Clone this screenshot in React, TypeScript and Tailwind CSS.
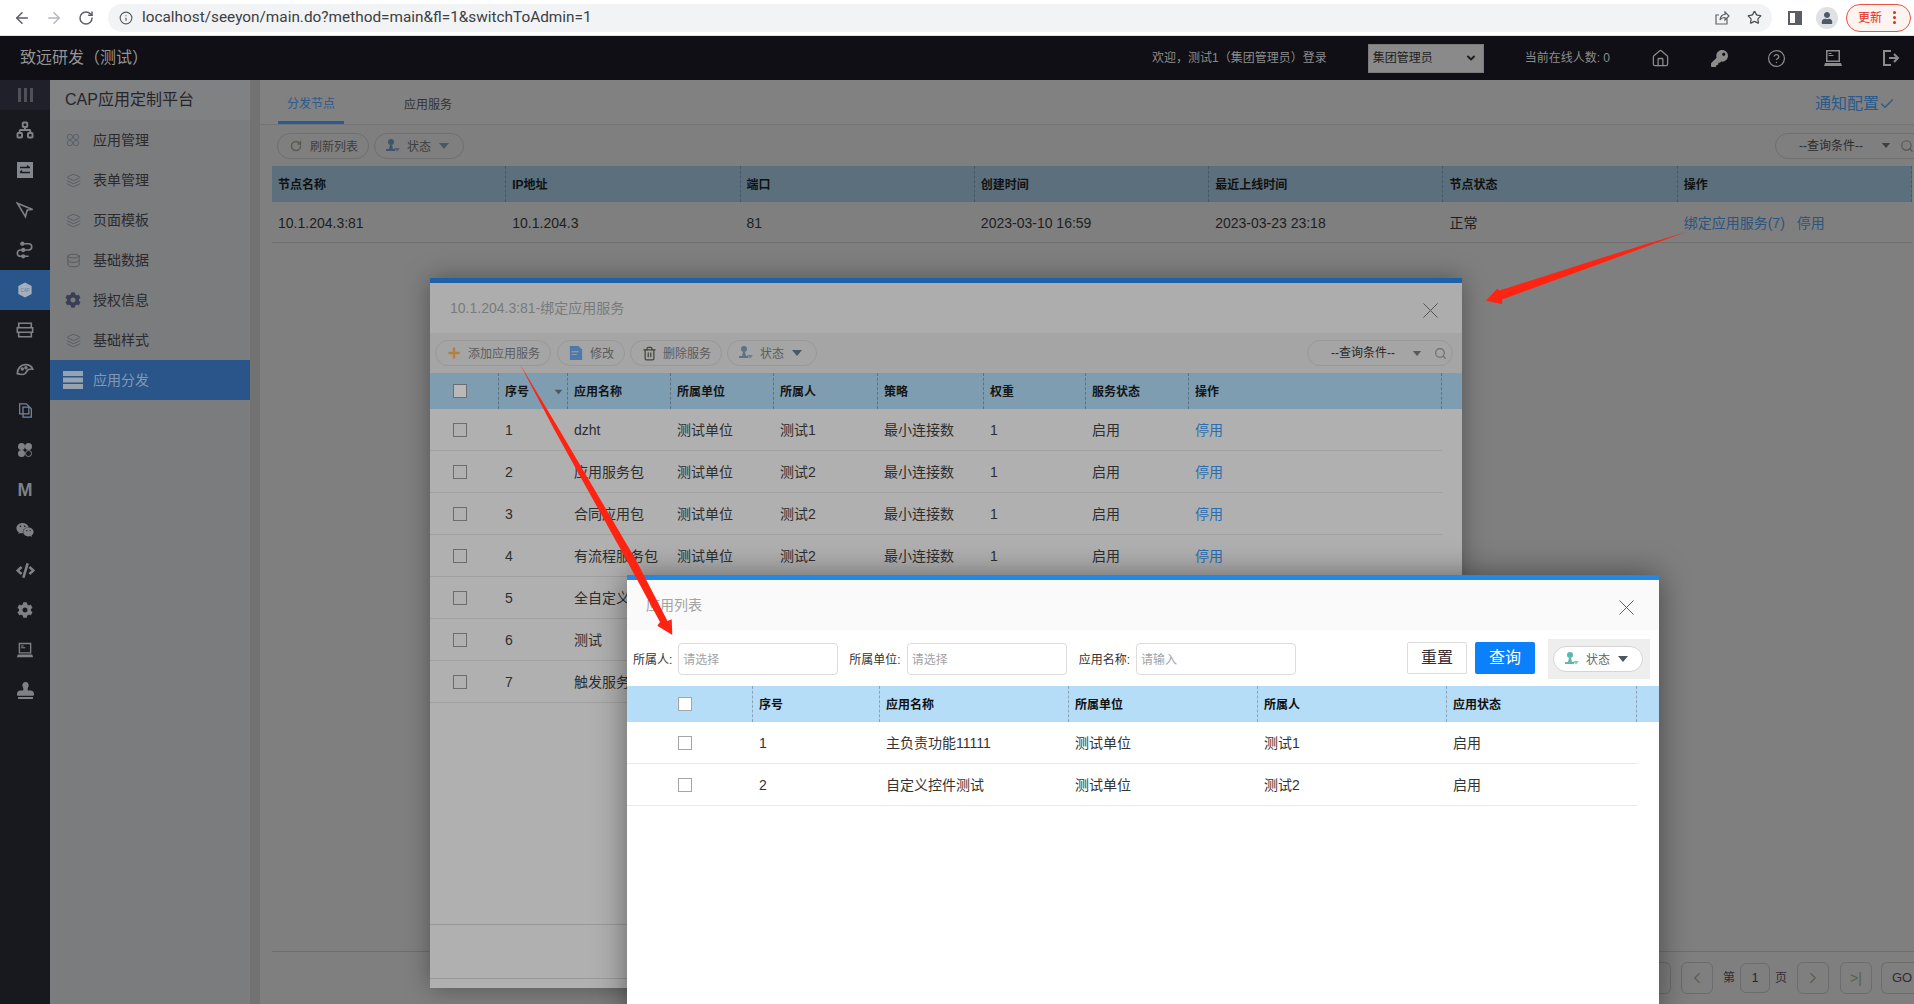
import React from 'react';
import {
  ArrowLeft, ArrowRight, RotateCw, Info, Star, House, CircleHelp, ChevronDown, Check, Search,
  Database, Layers, Network, Plus, Trash2, ChevronLeft, ChevronRight,
} from 'lucide-react';
import { FaKey, FaWeixin, FaCog, FaStamp, FaCode, FaUser } from 'react-icons/fa';

const FilterUser = ({ className }: { className?: string }) => (
  <svg viewBox="0 0 16 16" className={className} fill="currentColor">
    <circle cx="6" cy="4" r="3" />
    <path d="M5 7h2l1 4h2v2H1v-2h3z" />
    <path d="M9 10h6l-3 3.5z" opacity="0.75" />
  </svg>
);

const Caret = ({ className }: { className?: string }) => (
  <svg viewBox="0 0 12 8" className={className} fill="currentColor">
    <path d="M1 1h10L6 7z" />
  </svg>
);

const CloseX = ({ className }: { className?: string }) => (
  <svg viewBox="0 0 16 16" className={className} stroke="currentColor" strokeWidth="1" fill="none">
    <path d="M0.5 0.5l15 15M15.5 0.5l-15 15" />
  </svg>
);

const Clover = ({ className }: { className?: string }) => (
  <svg viewBox="0 0 16 16" className={className} stroke="currentColor" fill="none">
    <circle cx="4.5" cy="4.5" r="3" />
    <circle cx="11.5" cy="4.5" r="3" />
    <circle cx="4.5" cy="11.5" r="3" />
    <circle cx="11.5" cy="11.5" r="3" />
  </svg>
);

const Laptop = ({ className }: { className?: string }) => (
  <svg viewBox="0 0 20 20" className={className} fill="currentColor">
    <path fillRule="evenodd" d="M3 2h14v12H3zM4.500 3.500v9h11v-9z" />
    <path d="M5.500 5h3v1h-3zM5.500 7h5v1h-5z" />
    <path d="M2 15h16l1 3H1z" />
  </svg>
);

const railIcons: React.ReactNode[] = [
  <Network key="a" className="w-[18px] h-[18px]" strokeWidth={2.6} />,
  <svg key="b" viewBox="0 0 18 18" className="w-[18px] h-[18px]">
    <rect x="1" y="1" width="16" height="16" fill="#85878e" />
    <path d="M4 6.500h10M11 4.500l2 2M4 11.500h10M6 9.500l-2 2" stroke="#1a1b21" strokeWidth="1.300" fill="none" />
  </svg>,
  <svg key="c" viewBox="0 0 20 18" className="w-[18px] h-[18px]" stroke="currentColor" strokeWidth="1.800" fill="none">
    <path d="M1.500 1.500l17 7-6 .5-2 7.500z" />
  </svg>,
  <svg key="d" viewBox="0 0 20 20" className="w-[18px] h-[18px]" stroke="currentColor" strokeWidth="1.800" fill="none">
    <path d="M7 3h7a3 3 0 010 7H5a3.500 3.500 0 000 7h9" />
    <circle cx="7" cy="3" r="1.500" fill="currentColor" />
    <circle cx="8" cy="10" r="1.500" fill="currentColor" />
    <circle cx="8" cy="17" r="1.500" fill="currentColor" />
  </svg>,
  <svg key="e" viewBox="0 0 18 18" className="w-4 h-4">
    <path d="M9 0.500l7.500 4v9l-7.500 4-7.500-4v-9z" fill="#a5afb9" />
    <text x="9" y="11" textAnchor="middle" fontSize="5" fill="#5d7fa6">CAP</text>
  </svg>,
  <svg key="f" viewBox="0 0 20 18" className="w-[18px] h-[18px]" stroke="currentColor" strokeWidth="1.800" fill="none">
    <path d="M3 1.500h14v5H3zM1.500 6.500h17v5h-17zM3 11.500h14v5H3z" />
  </svg>,
  <svg key="g" viewBox="0 0 20 18" className="w-[18px] h-[18px]" stroke="currentColor" strokeWidth="1.900" fill="none">
    <path d="M1.500 13c0-6 4-10 9-10 4 0 7 2 8 5-4-.5-6 1-7 3-1 3-3 4-10 2z" />
    <circle cx="7" cy="8" r="1" fill="currentColor" />
    <circle cx="11" cy="6.500" r="1" fill="currentColor" />
  </svg>,
  <svg key="h" viewBox="0 0 16 18" className="w-[15px] h-[15px]" stroke="currentColor" strokeWidth="1.500" fill="none">
    <path d="M1 1h8l3 3v9H1z" />
    <path d="M5 5h8l2 2v10H5z" stroke="#6e87a8" />
  </svg>,
  <svg key="i" viewBox="0 0 16 16" className="w-4 h-4" fill="currentColor">
    <circle cx="4.500" cy="4.500" r="3.500" />
    <circle cx="11.500" cy="4.500" r="3.500" />
    <circle cx="4.500" cy="11.500" r="3.500" />
    <circle cx="11.500" cy="11.500" r="3" fill="none" stroke="currentColor" />
  </svg>,
  <span key="j" className="text-[18px] leading-none font-bold">M</span>,
  <FaWeixin key="k" className="w-[18px] h-[18px]" />,
  <FaCode key="l" className="w-[19px] h-[19px]" />,
  <FaCog key="m" className="w-4 h-4" />,
  <Laptop key="n" className="w-[18px] h-[18px]" />,
  <FaStamp key="o" className="w-[17px] h-[17px]" />,
];

const navItems = [
  { label: '应用管理', icon: <Clover className="w-[14px] h-[14px] text-[#555d62]" /> },
  { label: '表单管理', icon: <Layers className="w-[15px] h-[15px] text-[#555d62]" strokeWidth={1.5} /> },
  { label: '页面模板', icon: <Layers className="w-[15px] h-[15px] text-[#555d62]" strokeWidth={1.5} /> },
  { label: '基础数据', icon: <Database className="w-[15px] h-[15px] text-[#54595d]" strokeWidth={1.5} /> },
  { label: '授权信息', icon: <FaCog className="w-4 h-4 text-[#3a3f55]" /> },
  { label: '基础样式', icon: <Layers className="w-[15px] h-[15px] text-[#555d62]" strokeWidth={1.5} /> },
];

function Pill({ icon, label, caret, className }: { icon: React.ReactNode; label: string; caret?: boolean; className: string }) {
  return (
    <div className={`h-[26px] rounded-full border flex items-center pl-[10px] pr-[10px] gap-[6px] text-[12px] shrink-0 ${className}`}>
      <span className="w-4 h-4 flex items-center justify-center">{icon}</span>
      <span className="mt-[2px]">{label}</span>
      {caret && <Caret className="w-3 h-2 ml-[1px] mr-[3px] text-[#4a5863]" />}
    </div>
  );
}

const mainHead = ['节点名称', 'IP地址', '端口', '创建时间', '最近上线时间', '节点状态', '操作'];
const m1Head = ['序号', '应用名称', '所属单位', '所属人', '策略', '权重', '服务状态', '操作'];
const m1Rows = [
  ['1', 'dzht', '测试单位', '测试1'],
  ['2', '应用服务包', '测试单位', '测试2'],
  ['3', '合同应用包', '测试单位', '测试2'],
  ['4', '有流程服务包', '测试单位', '测试2'],
  ['5', '全自定义', '测试单位', '测试2'],
  ['6', '测试', '测试单位', '测试2'],
  ['7', '触发服务', '测试单位', '测试2'],
];
const m2Head = ['序号', '应用名称', '所属单位', '所属人', '应用状态'];
const m2Rows = [
  ['1', '主负责功能11111', '测试单位', '测试1', '启用'],
  ['2', '自定义控件测试', '测试单位', '测试2', '启用'],
];

const PageBtn = ({ children, className }: { children?: React.ReactNode; className?: string }) => (
  <div className={`w-8 h-8 rounded-md border border-[#6c6c6c] flex items-center justify-center shrink-0 ${className ?? ''}`}>
    {children}
  </div>
);

function Field({ label, hint, className }: { label: string; hint: string; className?: string }) {
  return (
    <div className={`flex items-center gap-[6px] mt-[2px] ${className ?? ''}`}>
      <span className="text-[12px] pt-[2px] text-[#333]">{label}</span>
      <div className="w-[160px] h-8 rounded border border-[#dcdcdc] pl-[4px] pt-[2px] flex items-center text-[12px] text-[#a3a3a3]">{hint}</div>
    </div>
  );
}

export default function App() {
  return (
    <div className="relative w-screen h-screen overflow-hidden flex flex-col bg-[#7f7f7f] [font-family:'Liberation_Sans','Noto_Sans_CJK_SC',sans-serif]">
      {/* Browser bar */}
      <div className="h-[36px] shrink-0 bg-white border-b border-[#dfe1e5] flex items-center text-[#5f6368]">
        <ArrowLeft className="w-[18px] h-[18px] ml-[13px] text-[#5a5d62]" strokeWidth={2} />
        <ArrowRight className="w-[18px] h-[18px] ml-[14px] text-[#b5b7bb]" strokeWidth={2} />
        <RotateCw className="w-4 h-4 ml-[15px] text-[#5a5d62]" strokeWidth={2.2} />
        <div className="ml-[14px] w-[1664px] h-[28px] rounded-full bg-[#f1f3f4] flex items-center pl-[11px] pr-[10px]">
          <Info className="w-[14px] h-[14px] text-[#5a5d62]" />
          <span className="ml-[9px] text-[15.35px] text-[#3c4043] [font-family:Roboto,sans-serif]">localhost/seeyon/main.do?method=main&amp;fl=1&amp;switchToAdmin=1</span>
          <svg viewBox="0 0 16 16" className="w-4 h-4 ml-auto text-[#5f6368]" fill="none" stroke="currentColor" strokeWidth="1.200">
            <path d="M13 8.500V14H2V5h3M6 10c0-4 3-5.500 5-5.500V2l4 4-4 4V7.500C9 7.500 7 8 6 10z" />
          </svg>
          <Star className="w-[15px] h-[15px] ml-[17px] text-[#4b4e52]" strokeWidth={2} />
        </div>
        <div className="ml-[16px] w-[14px] h-[14px] border-2 border-[#5a5d62] flex justify-end">
          <div className="w-[5px] bg-[#5a5d62]" />
        </div>
        <div className="ml-[14px] w-[22px] h-[22px] rounded-full bg-[#dfe1e5] flex items-center justify-center overflow-hidden">
          <FaUser className="w-3 h-3 text-[#4d5a6a]" />
        </div>
        <div className="ml-[8px] w-[65px] h-[28px] rounded-full border border-[#e8523f] bg-[#fdf3f1] flex items-center pl-[11px] text-[12px] text-[#e02a1c]">
          <span>更新</span>
          <span className="ml-[11px] flex flex-col gap-[2px]">
            <span className="w-[3px] h-[3px] rounded-full bg-[#e02a1c]" />
            <span className="w-[3px] h-[3px] rounded-full bg-[#e02a1c]" />
            <span className="w-[3px] h-[3px] rounded-full bg-[#e02a1c]" />
          </span>
        </div>
      </div>

      {/* App header */}
      <div className="h-[44px] shrink-0 bg-[#0f0f15] flex items-center text-[#8c8c8c]">
        <span className="ml-5 text-[16px] text-[#949494]">致远研发（测试）</span>
        <span className="ml-auto text-[12px]">欢迎，测试1（集团管理员）登录</span>
        <div className="ml-[41px] w-[116px] h-[29px] bg-[#8a8a8a] border border-[#7a7a7a] flex items-center pl-1 text-[12px] text-[#1f1f1f]">
          <span>集团管理员</span>
          <ChevronDown className="w-3 h-3 ml-auto mr-[6px]" strokeWidth={4} />
        </div>
        <span className="ml-[41px] text-[12px]">当前在线人数: 0</span>
        <House className="w-[19px] h-[19px] ml-[41px]" strokeWidth={1.6} />
        <FaKey className="w-[17px] h-[17px] ml-[41px]" />
        <CircleHelp className="w-[19px] h-[19px] ml-[39px]" strokeWidth={1.6} />
        <Laptop className="w-5 h-5 ml-[37px]" />
        <svg viewBox="0 0 20 20" className="w-5 h-5 ml-[37px] mr-[14px]" fill="none" stroke="currentColor" strokeWidth="2">
          <path d="M11 3H4v14h7M9 10h9M14 6l4 4-4 4" />
        </svg>
      </div>

      <div className="flex flex-1 min-h-0">
        {/* Icon rail */}
        <div className="w-[50px] shrink-0 bg-[#18191f] text-[#7f8187] flex flex-col">
          <div className="h-[30px] bg-[#20202a] flex items-center justify-center gap-[3px]">
            <span className="w-[3px] h-[14px] bg-[#4f5058]" />
            <span className="w-[3px] h-[14px] bg-[#4f5058]" />
            <span className="w-[3px] h-[14px] bg-[#4f5058]" />
          </div>
          {railIcons.map((icon, i) => (
            <div key={i} className={`h-10 flex items-center justify-center ${i === 4 ? 'bg-[#29558a]' : ''}`}>{icon}</div>
          ))}
        </div>

        {/* Nav column */}
        <div className="w-[200px] shrink-0 bg-[#7b7c7e] flex flex-col">
          <div className="h-10 bg-[#808183] flex items-center pl-[15px] text-[16px] text-[#26262a]">CAP应用定制平台</div>
          {navItems.map((item) => (
            <div key={item.label} className="h-10 flex items-center text-[14px] text-[#2b2b2e]">
              <span className="w-[43px] flex justify-center pl-[3px]">{item.icon}</span>
              {item.label}
            </div>
          ))}
          <div className="h-10 bg-[#29558a] flex items-center text-[14px] text-[#8598b0]">
            <svg viewBox="0 0 20 18" className="w-5 h-[18px] ml-[13px] mr-[10px] text-[#97a3b0]" fill="currentColor">
              <path d="M0 0h20v5H0zM0 6.500h20v5H0zM0 13h20v5H0z" />
            </svg>
            应用分发
          </div>
        </div>
        <div className="w-[10px] shrink-0 bg-[#727272]" />

        {/* Main */}
        <div className="flex-1 min-w-0 flex flex-col bg-[#7f7f7f]">
          <div className="h-[45px] shrink-0 bg-[#818181] border-b border-[#747474] flex items-end pl-[18px] pr-[19px] text-[12px]">
            <div className="w-[66px] h-[43px] border-b-[3px] border-[#2b5a90] flex items-center justify-center pt-[5px] text-[#2c5a88]">分发节点</div>
            <div className="h-[43px] ml-[60px] flex items-center pt-[5px] text-[#333]">应用服务</div>
            <div className="ml-auto h-[45px] flex items-center pt-[5px] text-[16px] text-[#2a5a8a]">
              通知配置<Check className="w-4 h-4" strokeWidth={2} />
            </div>
          </div>

          <div className="h-[41px] shrink-0 flex items-center pl-[17px] gap-[5px] text-[#444]">
            <Pill className="border-[#6f6f6f] text-[#3e3e3e]" label="刷新列表" icon={<RotateCw className="w-3 h-3 text-[#5b5b50]" strokeWidth={3} />} />
            <Pill className="border-[#6f6f6f] text-[#3e3e3e]" label="状态" caret icon={<FilterUser className="w-4 h-4 text-[#3d566c]" />} />
            <div className="ml-auto -mr-[11px] w-[150px] h-[26px] rounded-l-full border border-[#6f6f6f] flex items-center pl-[23px] text-[12px] text-[#2c2c2c] shrink-0">
              --查询条件--
              <Caret className="w-[10px] h-[7px] ml-[18px] text-[#3e3e3e]" />
              <Search className="w-[14px] h-[14px] ml-[9px] text-[#555]" />
            </div>
          </div>

          <div className="ml-3 w-[1640px] flex-1 min-h-0">
            <div className="grid grid-cols-7 h-9 bg-[#5b6f7c] text-[12px] font-semibold text-[#111]">
              {mainHead.map((h) => (
                <div key={h} className="flex items-center pl-[6px] pt-[2px] border-r border-dashed border-[#46586a]">{h}</div>
              ))}
            </div>
            <div className="grid grid-cols-7 h-[41px] border-b border-[#6f6f6f] text-[14px] text-[#1e1e1e]">
              {['10.1.204.3:81', '10.1.204.3', '81', '2023-03-10 16:59', '2023-03-23 23:18', '正常'].map((t) => (
                <div key={t} className="flex items-center pl-[6px] pt-[3px]">{t}</div>
              ))}
              <div className="flex items-center pl-[6px] pt-[3px] text-[#2a5580]">
                绑定应用服务(7)<span className="ml-3">停用</span>
              </div>
            </div>
          </div>

          {/* Pagination */}
          <div className="ml-3 h-[53px] shrink-0 border-t border-[#6e6e6e] flex items-center justify-end text-[12px] text-[#332b33]">
            <PageBtn className="mr-[10px]" />
            <PageBtn><ChevronLeft className="w-[18px] h-[18px] text-[#58604f]" strokeWidth={1.5} /></PageBtn>
            <span className="ml-[10px]">第</span>
            <div className="ml-[5px] w-[30px] h-[30px] rounded-md border border-[#6c6c6c] flex items-center justify-center text-[#223]">1</div>
            <span className="ml-[5px]">页</span>
            <PageBtn className="ml-[10px]"><ChevronRight className="w-[18px] h-[18px] text-[#58604f]" strokeWidth={1.5} /></PageBtn>
            <PageBtn className="ml-[11px]"><span className="text-[#58604f] text-[14px]">&gt;|</span></PageBtn>
            <div className="ml-[9px] w-[33px] h-8 rounded-l-md border border-r-0 border-[#6c6c6c] flex items-center pl-[10px] text-[13px]">GO</div>
          </div>
        </div>
      </div>

      {/* First dialog */}
      <div className="absolute left-[430px] top-[278px] w-[1032px] h-[710px] bg-[#b0b0b0] border-t-[5px] border-[#1d62a8] flex flex-col shadow-[0_0_24px_rgba(0,0,0,0.35)]">
        <div className="h-[50px] shrink-0 flex items-center pl-[20px] pr-[24px] bg-[#adadad] text-[14px] text-[#7a7a7a]">
          10.1.204.3:81-绑定应用服务
          <CloseX className="w-[15px] h-[15px] ml-auto mt-[4px] text-[#4e4e4e]" />
        </div>
        <div className="h-10 shrink-0 bg-[#a5a5a5] flex items-center pl-[5px] gap-[5px]">
          <Pill className="border-[#989898] text-[#5c5c5c]" label="添加应用服务" icon={<Plus className="w-4 h-4 text-[#b4803e]" strokeWidth={3.5} />} />
          <Pill className="border-[#989898] text-[#5c5c5c] ml-[1px]" label="修改" icon={
            <svg viewBox="0 0 16 16" className="w-[14px] h-4 text-[#5079ab]" fill="currentColor">
              <path d="M1 0h10l4 4v12H1zM3 6v1h8V6zM3 9v1h6V9z" fillRule="evenodd" />
            </svg>
          } />
          <Pill className="border-[#989898] text-[#5c5c5c]" label="删除服务" icon={<Trash2 className="w-[15px] h-[15px] text-[#45463f]" strokeWidth={2} />} />
          <Pill className="border-[#989898] text-[#5c5c5c]" label="状态" caret icon={<FilterUser className="w-4 h-4 text-[#5a7386]" />} />
          <div className="ml-[485px] w-[146px] h-[26px] rounded-full border border-[#989898] flex items-center pl-[23px] text-[12px] text-[#2a2a2a]">
            --查询条件--
            <Caret className="w-[10px] h-[7px] ml-[17px] text-[#5a5a5a]" />
            <Search className="w-[13px] h-[13px] ml-[12px] text-[#6a6a6a]" />
          </div>
        </div>
        <div className="h-9 shrink-0 bg-[#7f9db0] text-[12px] font-semibold text-[#151515]">
          <div className="w-[1012px] h-full grid grid-cols-[69px_69px_103px_103px_104px_106px_102px_103px_253px]">
            <div className="flex items-center pl-[23px] border-r border-dashed border-[#5d7383]">
              <span className="w-[14px] h-[14px] border border-[#6d6d6d] bg-[#b8b8b8]" />
            </div>
            {m1Head.map((h) => (
              <div key={h} className="flex items-center pl-[6px] pr-1 pt-[2px] border-r border-dashed border-[#5d7383]">
                {h}
                {h === '序号' && <Caret className="w-[9px] h-[6px] ml-auto text-[#4a5863]" />}
              </div>
            ))}
          </div>
        </div>
        {m1Rows.map((r) => (
          <div key={r[0]} className="w-[1012px] h-[42px] shrink-0 border-b border-[#a0a0a0] grid grid-cols-[69px_69px_103px_103px_104px_106px_102px_103px_253px] items-center text-[14px] text-[#2e2e2e]">
            <span className="ml-[23px] w-[14px] h-[14px] border border-[#6d6d6d]" />
            {r.map((t) => (
              <span key={t} className="pl-[6px] pt-[2px] whitespace-nowrap">{t}</span>
            ))}
            <span className="pl-[6px] pt-[2px]">最小连接数</span>
            <span className="pl-[6px] pt-[2px]">1</span>
            <span className="pl-[6px] pt-[2px]">启用</span>
            <span className="pl-[6px] pt-[2px] text-[#2a6db0]">停用</span>
          </div>
        ))}
        <div className="mt-[221px] h-[55px] shrink-0 border-y border-[#999]" />
      </div>

      {/* Second dialog */}
      <div className="absolute left-[627px] top-[575px] w-[1032px] h-[440px] bg-white border-t-[5px] border-[#2388e4] flex flex-col shadow-[0_0_30px_rgba(0,0,0,0.45)]">
        <div className="h-[50px] shrink-0 bg-[#fafafa] flex items-center pl-[19px] pr-[25px] text-[14px] text-[#a3a3a3]">
          应用列表
          <CloseX className="w-[15px] h-[15px] ml-auto mt-[4px] text-[#555]" />
        </div>
        <div className="h-[56px] shrink-0 flex items-center pl-[6px] pr-[9px]">
          <Field label="所属人:" hint="请选择" />
          <Field label="所属单位:" hint="请选择" className="ml-[11px]" />
          <Field label="应用名称:" hint="请输入" className="ml-[12px]" />
          <button className="ml-auto w-[60px] h-8 border border-[#dcdcdc] rounded-[2px] text-[16px] text-[#3a2a30]">重置</button>
          <button className="ml-2 w-[60px] h-8 bg-[#0b80fb] rounded-[2px] text-[16px] text-white">查询</button>
          <div className="ml-[13px] mt-[2px] w-[102px] h-10 bg-[#eeeeee] flex items-center pl-[5px]">
            <Pill className="border-[#d5d5d5] bg-white text-[#666]" label="状态" caret icon={<FilterUser className="w-4 h-4 text-[#5cb8ac]" />} />
          </div>
        </div>
        <div className="h-9 shrink-0 bg-[#b5ddf7] text-[12px] font-semibold text-[#111]">
          <div className="w-[1010px] h-full grid grid-cols-[126px_127px_189px_189px_189px_190px]">
            <div className="flex items-center pl-[51px] border-r border-dashed border-[#8aa4b8]">
              <span className="w-[14px] h-[14px] border border-[#a5a5a5] bg-white" />
            </div>
            {m2Head.map((h) => (
              <div key={h} className="flex items-center pl-[6px] pt-[2px] border-r border-dashed border-[#8aa4b8]">{h}</div>
            ))}
          </div>
        </div>
        {m2Rows.map((r) => (
          <div key={r[0]} className="w-[1010px] h-[42px] shrink-0 border-b border-[#e8e8e8] grid grid-cols-[126px_127px_189px_189px_189px_190px] items-center text-[14px] text-[#333]">
            <span className="ml-[51px] w-[14px] h-[14px] border border-[#a5a5a5]" />
            {r.map((t) => (
              <span key={t} className="pl-[6px] pt-[2px]">{t}</span>
            ))}
          </div>
        ))}
      </div>

      {/* Red annotation arrows */}
      <svg className="absolute inset-0 w-full h-full pointer-events-none" fill="#ff2412">
        <polygon points="1686.700,231.700 1606,256.500 1499.500,290.500 1497.300,288.700 1486,300.700 1502.300,304.300 1502,299.500 1606,261.500" />
        <polygon points="520,364.300 559.500,430 636,560 667.500,621 671.700,619.300 672.300,635 657.300,625.700 660,622 626.500,560 554.500,430" />
      </svg>
    </div>
  );
}
